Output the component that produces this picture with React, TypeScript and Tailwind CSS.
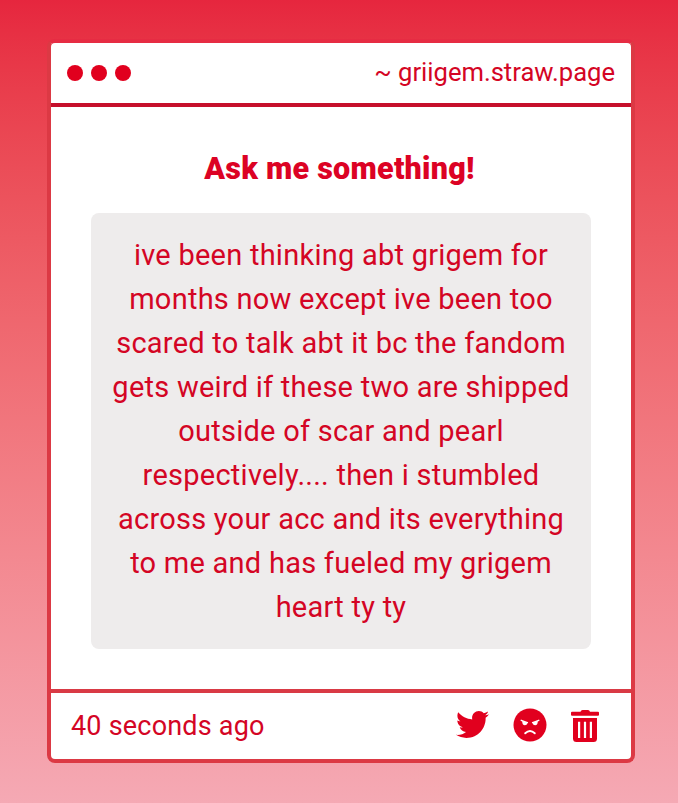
import React from 'react';
import { FaTwitter } from 'react-icons/fa';

function AngryIcon() {
  return (
    <svg width="34" height="34" viewBox="0 0 34 34" className="mb-[3px] ml-6" aria-label="Report">
      <circle cx="17" cy="17" r="16.5" fill="currentColor" />
      <g fill="none" stroke="#fff" strokeLinecap="round">
        <path d="M8.200 12.300l6.200 2.400M25.800 12.300l-6.200 2.400" strokeWidth="1.400" />
        <path d="M12.200 25.300q4.800-4.600 9.600 0" strokeWidth="1.900" />
      </g>
      <g fill="#fff">
        <path d="M9.200 12.700l5.200 2q-.3 2.600-2.500 2.600-2.700 0-2.700-4.600zM24.800 12.700l-5.200 2q.3 2.600 2.500 2.600 2.700 0 2.700-4.600z" />
      </g>
    </svg>
  );
}

function TrashIcon() {
  return (
    <svg width="28" height="32" viewBox="0 0 28 32" fill="currentColor" aria-label="Delete">
      <path d="M1 1.8h8.5Q10 0 11.500 0h5.500Q18.500 0 19 1.800h8q1 0 1 1v2q0 .9-1 .9H1q-1 0-1-.9v-2q0-1 1-1z" />
      <path
        fillRule="evenodd"
        d="M2 8h24v20.500q0 3.500-3.500 3.500h-17Q2 32 2 28.500zM7 11.800v16.200h2.200V11.800zM12.900 11.800v16.200h2.200V11.800zM18.800 11.800v16.200h2.200V11.800z"
      />
    </svg>
  );
}

export default function App() {
  return (
    <main className="h-[803px] w-[678px] bg-linear-to-b from-[#e6263e] to-[#f5a9b4] pt-[39px] pl-[47px] font-['Roboto',sans-serif] text-[#d40524]">
      <section className="flex h-[724px] w-[588px] flex-col overflow-hidden rounded-lg border-4 border-[#dc3944] border-t-[#e62c43] bg-white">
        <header className="flex h-16 shrink-0 items-center justify-between border-b-4 border-[#c60f2b] px-4">
          <div className="flex gap-2">
            <span className="size-4 rounded-full bg-[#e1001e]" />
            <span className="size-4 rounded-full bg-[#e1001e]" />
            <span className="size-4 rounded-full bg-[#e1001e]" />
          </div>
          <span className="pb-0.5 text-[25.6px] tracking-normal">~ griigem.straw.page</span>
        </header>
        <div className="flex flex-1 flex-col items-center px-10 pt-10">
          <h1 className="pr-[3px] text-[30.5px] leading-[44px] font-black tracking-[0.25px] text-[#dc0224]">Ask me something!</h1>
          <p className="mt-[22px] h-[436px] w-[500px] rounded-lg bg-[#eeecec] px-5 py-5 text-center text-[29px] leading-[44px] tracking-[0.25px]">
            ive been thinking abt grigem for months now except ive been too scared to talk abt it bc the fandom gets weird if these two are shipped outside of scar and pearl respectively.... then i stumbled across your acc and its everything to me and has fueled my grigem heart ty ty
          </p>
        </div>
        <footer className="flex h-[70px] shrink-0 items-center justify-between border-t-4 border-[#d93a45] pr-8 pl-5">
          <span className="text-[27px] tracking-[0.2px]">40 seconds ago</span>
          <div className="flex items-center text-[#e1001e]">
            <FaTwitter size={33} className="mb-1" />
            <AngryIcon />
            <span className="ml-6"><TrashIcon /></span>
          </div>
        </footer>
      </section>
    </main>
  );
}
